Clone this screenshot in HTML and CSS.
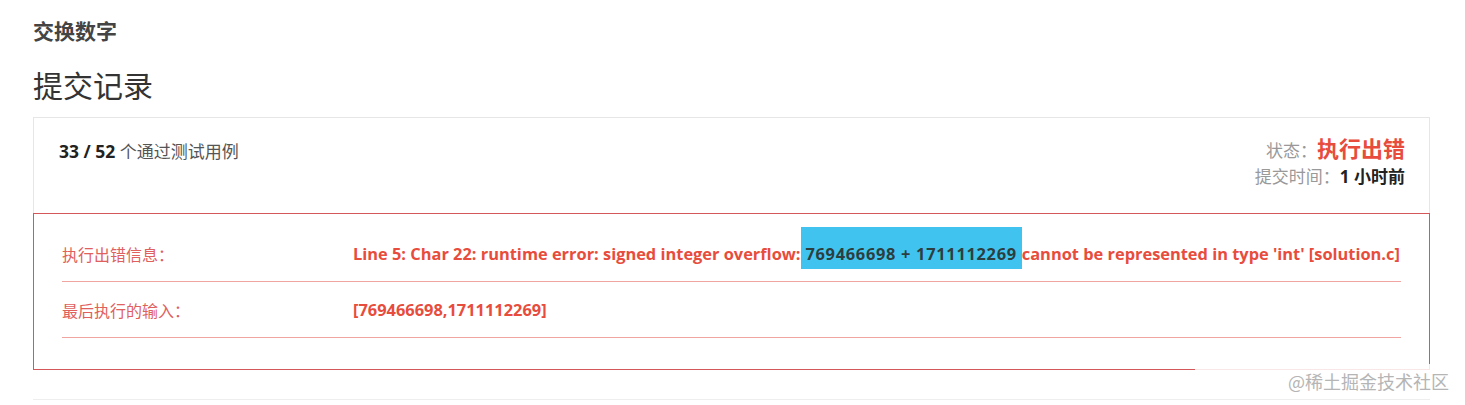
FILE: index.html
```html
<!DOCTYPE html>
<html lang="zh-CN">
<head>
<meta charset="utf-8">
<title>提交记录</title>
<link rel="stylesheet" href="styles.css">
</head>
<body>
<div class="page">
  <h3 class="problem-title">交换数字</h3>
  <h2 class="section-title">提交记录</h2>
  <div class="panel">
    <div class="panel-heading">
      <div class="result-count"><b>33 / 52</b> 个通过测试用例</div>
      <div class="result-meta">
        <div class="meta-line"><span class="meta-label">状态：</span><span class="status-error">执行出错</span></div>
        <div class="meta-line"><span class="meta-label">提交时间：</span><span class="meta-time">1 小时前</span></div>
      </div>
    </div>
    <div class="error-box">
      <div class="error-row">
        <div class="error-label">执行出错信息：</div>
        <div class="error-value">Line 5: Char 22: runtime error: signed integer overflow:<span class="sel"> 769466698 + 1711112269 </span>cannot be represented in type 'int' [solution.c]</div>
      </div>
      <div class="error-row">
        <div class="error-label">最后执行的输入：</div>
        <div class="error-value">[769466698,1711112269]</div>
      </div>
    </div>
    <div class="panel-foot"></div>
  </div>
</div>
<div class="watermark">@稀土掘金技术社区</div>
</body>
</html>
```

FILE: styles.css
```css
html, body {
  margin: 0;
  padding: 0;
  background: #fff;
}
body {
  font-family: "Open Sans", "Noto Sans CJK SC", sans-serif;
  color: #333;
  width: 1465px;
  height: 405px;
  overflow: hidden;
  position: relative;
}
.page {
  padding: 0 35px 0 33px;
}
.problem-title {
  margin: 0;
  padding-top: 17px;
  font-size: 21px;
  line-height: 28px;
  font-weight: 700;
  color: #444;
}
.section-title {
  margin: 0;
  padding-top: 21px;
  font-size: 30px;
  line-height: 40px;
  font-weight: 400;
  color: #333;
}
.panel {
  margin-top: 11px;
  border-top: 1px solid #e6e6e6;
}
.panel-heading {
  display: flex;
  justify-content: space-between;
  align-items: flex-start;
  height: 95px;
  box-sizing: border-box;
  padding: 20px 24px 0 25px;
  border-left: 1px solid #e6e6e6;
  border-right: 1px solid #e6e6e6;
}
.result-count {
  font-size: 17px;
  line-height: 26px;
  color: #555;
}
.result-count b {
  color: #222;
  font-weight: 700;
  font-size: 17.5px;
}
.result-meta {
  text-align: right;
  margin-top: -4px;
}
.meta-line {
  font-size: 17px;
  line-height: 24px;
  color: #999;
}
.meta-line:first-child {
  line-height: 28px;
}
.status-error {
  color: #e74c3c;
  font-weight: 700;
  font-size: 22px;
}
.meta-time {
  color: #222;
  font-weight: 700;
}
.error-box {
  border: 1px solid #d4585a;
  padding: 12px 28px 31px 28px;
}
.error-row {
  display: flex;
  align-items: center;
  height: 55px;
  border-bottom: 1px solid #f0a5a3;
}
.error-label {
  width: 291px;
  flex: none;
  font-size: 16px;
  color: #e0605d;
}
.error-value {
  font-size: 16.4px;
  font-weight: 700;
  color: #e74c3c;
  white-space: nowrap;
}
.sel {
  background: #40c4ef;
  color: #2d3e3e;
  padding: 15px 0 4px;
  letter-spacing: 0.7px;
}
.panel-foot {
  height: 29px;
  border-bottom: 1px solid #eeeeee;
}
.watermark {
  position: absolute;
  left: 1195px;
  top: 364px;
  width: 260px;
  height: 34px;
  box-sizing: border-box;
  padding: 4px 6px 0 0;
  text-align: right;
  background: rgba(255, 255, 255, 0.85);
  font-family: "Noto Sans CJK SC", sans-serif;
  font-size: 18px;
  line-height: 26px;
  color: #b5b5b5;
}
```
